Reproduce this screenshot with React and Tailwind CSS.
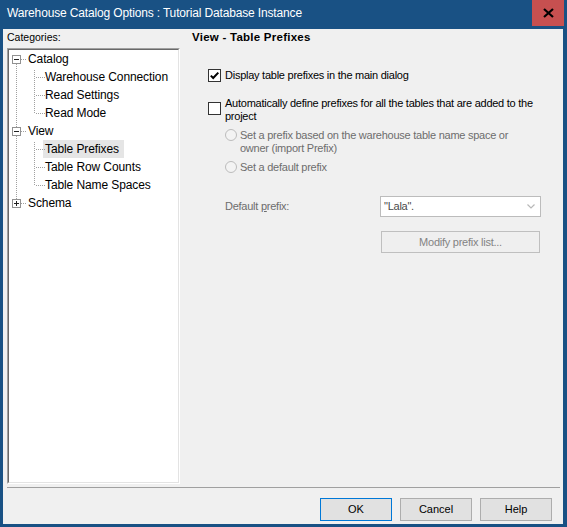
import React from "react";

function Check({ checked }) {
  return (
    <div className="w-[13px] h-[13px] shrink-0 border border-[#333333] bg-white flex items-center justify-center">
      {checked && (
        <svg width="11" height="11" viewBox="0 0 11 11">
          <path d="M1.8 5.6 L4.2 8 L9.3 2.6" fill="none" stroke="#000" strokeWidth="2" />
        </svg>
      )}
    </div>
  );
}

function Radio() {
  return <div className="w-[12px] h-[12px] shrink-0 rounded-full border border-[#bcbcbc] bg-[#f3f3f3]" />;
}

function TreeLines() {
  const dot = { stroke: "#a0a0a0", strokeWidth: 1, strokeDasharray: "1 1", shapeRendering: "crispEdges" };
  const top = [9, 81, 153];
  const children = [27, 45, 63, 99, 117, 135];
  return (
    <svg className="absolute left-0 top-0" width="170" height="170" viewBox="0 0 170 170">
      <line x1="7.5" y1="14" x2="7.5" y2="77" style={dot} />
      <line x1="7.5" y1="86" x2="7.5" y2="149" style={dot} />
      <line x1="25.5" y1="20" x2="25.5" y2="64" style={dot} />
      <line x1="25.5" y1="92" x2="25.5" y2="136" style={dot} />
      {top.map((y) => (
        <line key={"h" + y} x1="12" y1={y + 0.5} x2="18" y2={y + 0.5} style={dot} />
      ))}
      {children.map((y) => (
        <line key={"c" + y} x1="27" y1={y + 0.5} x2="36" y2={y + 0.5} style={dot} />
      ))}
      {top.map((y, i) => (
        <g key={"b" + y} shapeRendering="crispEdges">
          <rect x="3.5" y={y - 3.5} width="8" height="8" fill="#fff" stroke="#919191" />
          <line x1="5" y1={y + 0.5} x2="10" y2={y + 0.5} stroke="#222" />
          {i === 2 && <line x1="7.5" y1={y - 2} x2="7.5" y2={y + 3} stroke="#222" />}
        </g>
      ))}
    </svg>
  );
}

function TreeRow({ label, child, selected }) {
  return (
    <div className={"h-[18px] flex items-center " + (child ? "pl-[34px]" : "pl-[19px]")}>
      {child ? (
        <span className={"h-[18px] leading-[18px] px-[2px] pr-[5px] " + (selected ? "bg-[#e5e5e5]" : "")}>{label}</span>
      ) : (
        <span className="h-[18px] leading-[18px]">{label}</span>
      )}
    </div>
  );
}

export default function App() {
  return (
    <div className="w-[567px] h-[527px] bg-[#195184] flex flex-col overflow-hidden font-['Liberation_Sans',Arial,sans-serif] text-black">
      <div className="h-[29px] shrink-0 flex items-start justify-between">
        <div className="pl-[7px] pt-[6px] text-white text-[12px] leading-[14px] tracking-[-0.15px]">
          Warehouse Catalog Options : Tutorial Database Instance
        </div>
        <div className="mr-[3px] w-[32px] h-[26px] bg-[#c75050] flex items-center justify-center">
          <svg width="11" height="10" viewBox="0 0 11 10">
            <path d="M1 1 L10 9 M10 1 L1 9" stroke="#000" strokeWidth="2.2" />
          </svg>
        </div>
      </div>

      <div className="flex-1 ml-[3px] mr-[4px] mb-[3px] bg-[#f0f0f0] flex flex-col min-h-0">
        <div className="flex flex-1 min-h-0">
          <div className="pl-[4px] w-[177px] shrink-0 flex flex-col">
            <div className="mt-[1px] h-[14px] leading-[14px] text-[10.5px]">
              Cate<span className="underline">g</span>ories:
            </div>
            <div className="mt-[4px] flex-1 border-t border-l border-t-[#a0a0a0] border-l-[#a0a0a0] border-r border-b border-r-white border-b-white">
              <div className="relative h-full bg-white border-t border-l border-t-[#696969] border-l-[#696969] border-r border-b border-r-[#e3e3e3] border-b-[#e3e3e3] text-[12px] tracking-[-0.1px]">
                <TreeLines />
                <TreeRow label="Catalog" />
                <TreeRow label="Warehouse Connection" child />
                <TreeRow label="Read Settings" child />
                <TreeRow label="Read Mode" child />
                <TreeRow label="View" />
                <TreeRow label="Table Prefixes" child selected />
                <TreeRow label="Table Row Counts" child />
                <TreeRow label="Table Name Spaces" child />
                <TreeRow label="Schema" />
              </div>
            </div>
          </div>

          <div className="ml-[12px] flex-1 flex flex-col text-[11px] tracking-[-0.25px]">
            <div className="mt-[1px] h-[14px] leading-[14px] font-bold text-[11.5px] tracking-[0.25px]">
              View - Table Prefixes
            </div>

            <div className="mt-[25px] ml-[16px] h-[13px] flex items-center">
              <Check checked />
              <span className="ml-[4px] leading-[13px] whitespace-nowrap">Display table prefixes in the main dialog</span>
            </div>

            <div className="mt-[15px] ml-[16px] flex items-start">
              <div className="mt-[5px]">
                <Check />
              </div>
              <span className="ml-[4px] leading-[13px] whitespace-nowrap">
                Automatically define prefixes for all the tables that are added to the
                <br />
                project
              </span>
            </div>

            <div className="mt-[6px] ml-[33px] flex items-start text-[#6d6d6d]">
              <Radio />
              <span className="ml-[3px] leading-[13px] whitespace-nowrap">
                Set a prefix based on the warehouse table name space or
                <br />
                owner (import Prefix)
              </span>
            </div>

            <div className="mt-[6px] ml-[33px] flex items-start text-[#6d6d6d]">
              <Radio />
              <span className="ml-[3px] leading-[13px] whitespace-nowrap">Set a default prefix</span>
            </div>

            <div className="mt-[22px] ml-[33px] h-[21px] flex items-center">
              <span className="w-[155px] shrink-0 text-[#6d6d6d] leading-[13px] -mt-[1px]">
                Default <span className="underline">p</span>refix:
              </span>
              <div className="w-[161px] h-[21px] bg-white border border-[#bcbcbc] flex items-center justify-between pl-[3px] pr-[5px]">
                <span className="text-[#4a4a4a] leading-[13px]">"Lala".</span>
                <svg width="8" height="5" viewBox="0 0 8 5">
                  <path d="M0.5 0.5 L4 4 L7.5 0.5" fill="none" stroke="#b8b8b8" strokeWidth="1.2" />
                </svg>
              </div>
            </div>

            <div className="mt-[14px] ml-[189px] w-[159px] h-[22px] border border-[#bfbfbf] bg-[#efefef] flex items-center justify-center text-[#838383] leading-[13px]">
              Modify prefix list...
            </div>
          </div>
        </div>

        <div className="mt-[3px] ml-[4px] mr-[3px] h-px bg-[#a0a0a0] shrink-0" />

        <div className="mt-[10px] mb-[3px] h-[23px] shrink-0 flex justify-end gap-[8px] pr-[11px] text-[11px]">
          <div className="w-[72px] h-[23px] border border-[#0078d7] bg-[#e1e1e1] flex items-center justify-center">OK</div>
          <div className="w-[72px] h-[23px] border border-[#adadad] bg-[#e1e1e1] flex items-center justify-center">Cancel</div>
          <div className="w-[72px] h-[23px] border border-[#adadad] bg-[#e1e1e1] flex items-center justify-center">Help</div>
        </div>
      </div>
    </div>
  );
}
